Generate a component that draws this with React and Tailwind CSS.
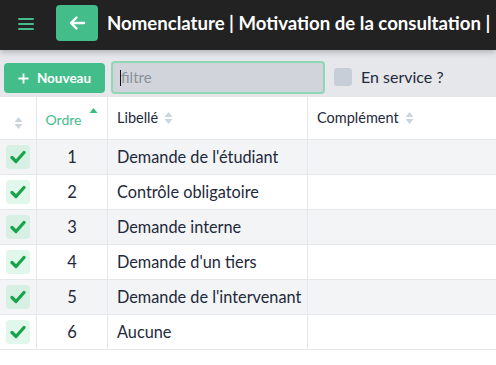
import React from "react";

const rows = [
  [1, "Demande de l'étudiant"],
  [2, "Contrôle obligatoire"],
  [3, "Demande interne"],
  [4, "Demande d'un tiers"],
  [5, "Demande de l'intervenant"],
  [6, "Aucune"],
];

function SortIcon({ active }) {
  return (
    <svg width="9" height="14" viewBox="0 0 9 14" className="shrink-0">
      <path d="M4.5 1 L8.5 6 L0.5 6 Z" fill={active ? "#3dbb85" : "#cbd5e1"} />
      {!active && <path d="M4.5 13 L8.5 8 L0.5 8 Z" fill="#cbd5e1" />}
    </svg>
  );
}

function Check() {
  return (
    <svg width="16" height="14" viewBox="0 0 16 14">
      <path d="M2 7.5 L6 11.5 L14 2.5" fill="none" stroke="#16a34a" strokeWidth="3.2" strokeLinecap="round" strokeLinejoin="round" />
    </svg>
  );
}

export default function App() {
  return (
    <div className="w-[496px] h-[365px] overflow-hidden bg-white text-[#1e293b]" style={{ fontFamily: 'Lato, "Open Sans", sans-serif' }}>
      <header className="h-[50px] bg-[#222222] flex items-center relative z-10 shadow-[0_2px_6px_rgba(0,0,0,0.25)] overflow-hidden">
        <div className="shrink-0 w-[16px] ml-[18px] mt-[-3px] flex flex-col gap-[3px]">
          <div className="h-[2px] bg-[#45bd8b] rounded" />
          <div className="h-[2px] bg-[#45bd8b] rounded" />
          <div className="h-[2px] bg-[#45bd8b] rounded" />
        </div>
        <div className="shrink-0 ml-[22px] w-[42px] h-[36px] mt-[-4px] rounded-[4px] bg-[#43be8b] flex items-center justify-center">
          <svg width="18" height="16" viewBox="0 0 18 16">
            <path d="M16 8 H3 M8.5 2.5 L3 8 L8.5 13.5" fill="none" stroke="white" strokeWidth="2.4" strokeLinecap="round" strokeLinejoin="round" />
          </svg>
        </div>
        <div className="shrink-0 ml-[9px] text-white font-bold text-[18.6px] whitespace-nowrap mt-[-3px]">
          Nomenclature | Motivation de la consultation |
        </div>
      </header>
      <div className="h-[47px] bg-[#e5e7eb] flex items-center px-[4px]">
        <button className="shrink-0 w-[101px] h-[30px] mt-[9px] rounded-[4px] bg-[#43be8b] text-white flex items-center justify-center gap-[8px] text-[13.5px] font-bold">
          <svg width="11" height="11" viewBox="0 0 12 12">
            <path d="M6 0.5 V11.5 M0.5 6 H11.5" stroke="white" strokeWidth="2" />
          </svg>
          Nouveau
        </button>
        <div className="shrink-0 ml-[6px] w-[214px] h-[33px] mt-[8px] rounded-[4px] border-2 border-[#8fd8b6] bg-[#d1d5db] flex items-center px-[7px]">
          <span className="w-px h-[16px] bg-[#111]" />
          <span className="text-[15px] text-[#8a8f98]">filtre</span>
        </div>
        <div className="shrink-0 ml-[9px] w-[18px] h-[18px] mt-[6px] rounded-[3px] bg-[#c8ced8]" />
        <span className="ml-[9px] mt-[6px] text-[16px] text-[#1e293b] whitespace-nowrap">En service ?</span>
      </div>
      <div className="grid grid-cols-[37px_71px_200px_1fr]">
        <div className="h-[43px] border-r border-b border-[#e5e7eb] flex items-end justify-center pb-[9px]">
          <SortIcon />
        </div>
        <div className="h-[43px] border-r border-b border-[#e5e7eb] flex items-center justify-center gap-[8px] text-[14px] text-[#45bd8b]">
          <span className="mt-[2px]">Ordre</span>
          <span className="mt-[-8px]"><SortIcon active /></span>
        </div>
        <div className="h-[43px] border-r border-b border-[#e5e7eb] flex items-center pl-[9px] gap-[6px] text-[14.5px] text-[#1e293b]">
          Libellé <SortIcon />
        </div>
        <div className="h-[43px] border-b border-[#e5e7eb] flex items-center pl-[9px] gap-[6px] text-[14.5px] text-[#1e293b]">
          Complément <SortIcon />
        </div>
        {rows.map(([n, label], i) => {
          const bg = i % 2 === 0 ? "bg-[#f3f4f6]" : "bg-white";
          const chk = i % 2 === 0 ? "bg-[#d8efe3]" : "bg-[#e1f7eb]";
          return (
            <React.Fragment key={n}>
              <div className={`h-[35px] border-r border-b border-[#e5e7eb] flex items-center justify-center ${bg}`}>
                <div className={`w-[24px] h-[24px] rounded-[4px] flex items-center justify-center ${chk}`}>
                  <Check />
                </div>
              </div>
              <div className={`h-[35px] border-r border-b border-[#e5e7eb] flex items-center justify-center text-[16.5px] ${bg}`}>{n}</div>
              <div className={`h-[35px] border-r border-b border-[#e5e7eb] flex items-center pl-[9px] text-[16.3px] whitespace-nowrap ${bg}`}>{label}</div>
              <div className={`h-[35px] border-b border-[#e5e7eb] ${bg}`} />
            </React.Fragment>
          );
        })}
      </div>
    </div>
  );
}
